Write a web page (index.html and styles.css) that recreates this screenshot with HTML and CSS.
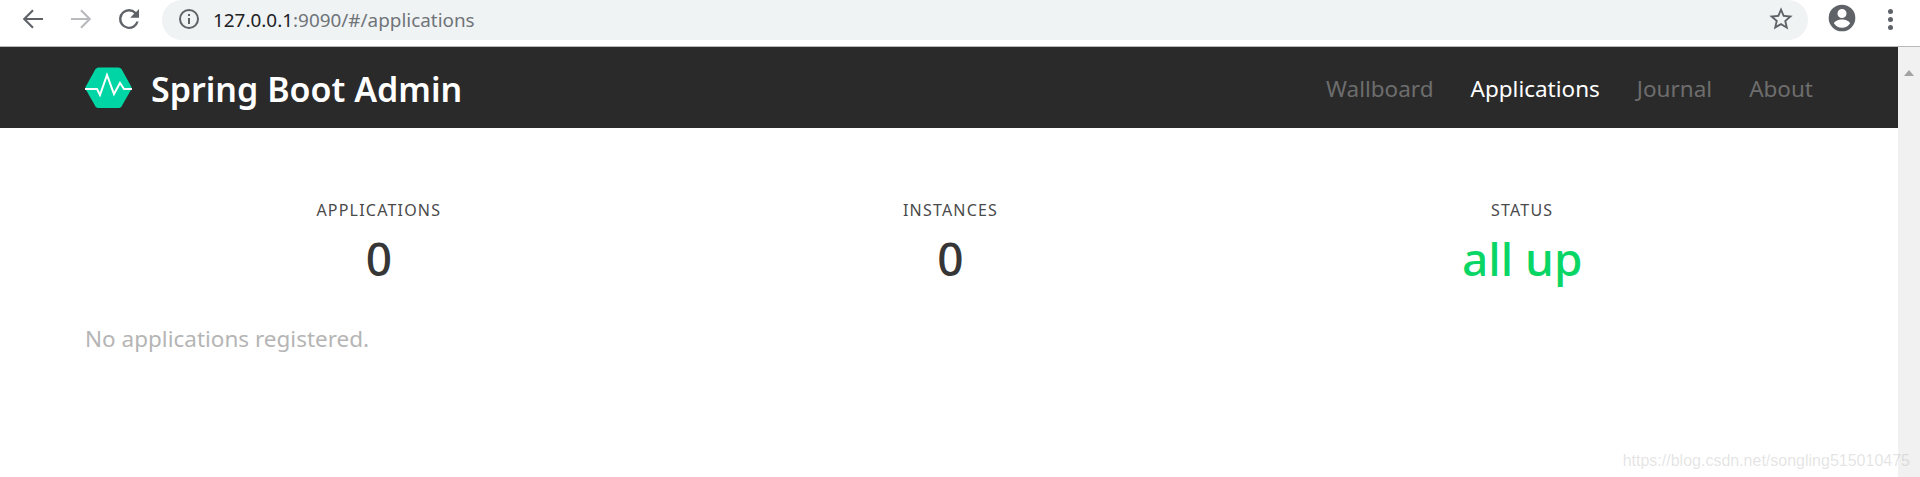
FILE: index.html
```html
<!doctype html>
<html lang="en">
  <head>
    <meta charset="UTF-8" />
    <title>Spring Boot Admin</title>
    <link rel="stylesheet" href="styles.css">
  </head>
  <body>
    <!-- Browser toolbar -->
    <div class="toolbar">
      <div class="toolbar-buttons">
        <svg class="tool-icon" viewBox="0 0 24 24"><path d="M20 12H5M12 5l-7 7 7 7" /></svg>
        <svg class="tool-icon disabled" viewBox="0 0 24 24"><path d="M4 12h15M12 5l7 7-7 7" /></svg>
        <svg class="tool-icon reload" viewBox="0 0 24 24"><path d="M17.65 6.35A7.96 7.96 0 0 0 12 4a8 8 0 1 0 7.73 10h-1.9A6.1 6.1 0 1 1 12 5.9c1.66 0 3.14.69 4.22 1.78L13 11h7V4z" /></svg>
      </div>
      <div class="omnibox">
        <svg class="info-icon" viewBox="0 0 24 24"><path d="M11 7h2v2h-2zm0 4h2v6h-2zm1-9a10 10 0 1 0 0 20 10 10 0 0 0 0-20zm0 18a8 8 0 1 1 0-16 8 8 0 0 1 0 16z" /></svg>
        <div class="url"><span class="url-host">127.0.0.1</span>:9090/#/applications</div>
        <svg class="star-icon" viewBox="0 0 24 24"><path d="M22 9.24l-7.19-.62L12 2 9.19 8.63 2 9.24l5.46 4.73L5.82 21 12 17.27 18.18 21l-1.63-7.03L22 9.24zM12 15.4l-3.76 2.27 1-4.28-3.32-2.88 4.38-.38L12 6.1l1.71 4.04 4.38.38-3.32 2.88 1 4.28L12 15.4z" /></svg>
      </div>
      <svg class="avatar-icon" viewBox="0 0 24 24"><path d="M12 2a10 10 0 1 0 0 20 10 10 0 0 0 0-20zm0 3.2a3.4 3.4 0 1 1 0 6.8 3.4 3.4 0 0 1 0-6.8zm0 14.2a7.4 7.4 0 0 1-6-3.2c.03-2 4-3.1 6-3.1s5.97 1.1 6 3.1a7.4 7.4 0 0 1-6 3.2z" /></svg>
      <div class="menu-dots"><span></span><span></span><span></span></div>
    </div>

    <div class="window">
      <div class="page">
        <!-- Main Header -->
        <div class="main-header">
          <div class="logo">
            <svg class="logo-mark" viewBox="0 0 47 42">
              <path class="hex" d="M.8 19.5 10.5 2Q11.6.5 13.5.5H33.5Q35.4.5 36.5 2L46.2 19.5Q47 21 46.2 22.5L36.5 39.5Q35.4 41 33.5 41H13.5Q11.6 41 10.5 39.5L.8 22.5Q0 21 .8 19.5Z" />
              <path class="pulse" d="M0 22H12L15 28 22 8 29 27 35 16 39 22H47" />
            </svg>
            <div class="logo-text">Spring Boot Admin</div>
          </div>
          <div class="nav">
            <div class="nav-item">Wallboard</div>
            <div class="nav-item active">Applications</div>
            <div class="nav-item">Journal</div>
            <div class="nav-item">About</div>
          </div>
        </div>

        <!-- Summary -->
        <div class="content">
          <div class="stats">
            <div class="stat">
              <div class="stat-label">Applications</div>
              <div class="stat-value">0</div>
            </div>
            <div class="stat">
              <div class="stat-label">Instances</div>
              <div class="stat-value">0</div>
            </div>
            <div class="stat">
              <div class="stat-label">Status</div>
              <div class="stat-value up">all up</div>
            </div>
          </div>
          <p class="empty">No applications registered.</p>
        </div>
      </div>

      <div class="scrollbar"><div class="scroll-arrow"></div></div>
    </div>

    <div class="watermark">https://blog.csdn.net/songling515010475</div>
  </body>
</html>
```

FILE: styles.css
```css
:root {
  --dark: #2a2a2a;
  --muted: #6d6d6d;
  --icon: #5f6368;
  --text: #363636;
  --green: #0ad666;
}

html,
body {
  height: 100%;
}

body {
  margin: 0;
  display: flex;
  flex-direction: column;
  overflow: hidden;
  background-color: #fff;
  color: var(--text);
  font-family: 'Noto Sans', 'Open Sans', sans-serif;
}

/* Browser toolbar */
.toolbar {
  display: flex;
  align-items: flex-start;
  height: 46px;
  flex-shrink: 0;
  border-bottom: 1px solid #b9b9b9;
}

.toolbar-buttons {
  display: flex;
  gap: 18px;
  padding: 4px 0 0 18px;
  width: 162px;
  box-sizing: border-box;
  flex-shrink: 0;
}

.tool-icon {
  width: 30px;
  height: 30px;
  fill: none;
  stroke: var(--icon);
  stroke-width: 1.7;
}

.tool-icon.disabled {
  stroke: #b8babd;
}

.tool-icon.reload {
  fill: var(--icon);
  stroke: none;
}

.omnibox {
  display: flex;
  align-items: center;
  width: 1646px;
  height: 40px;
  padding: 0 13px 0 15px;
  box-sizing: border-box;
  border-radius: 20px;
  background-color: #f0f3f4;
}

.info-icon {
  width: 24px;
  height: 24px;
  margin-top: -2px;
  fill: var(--icon);
  flex-shrink: 0;
}

.url {
  flex: 1;
  margin-left: 12px;
  font-size: 18.9px;
  color: #6f7479;
}

.url-host {
  color: #202124;
}

.star-icon {
  width: 28px;
  height: 28px;
  margin-top: -3px;
  fill: var(--icon);
}

.avatar-icon {
  width: 32px;
  height: 32px;
  margin: 2px 0 0 18px;
  fill: var(--icon);
  flex-shrink: 0;
}

.menu-dots {
  display: flex;
  flex-direction: column;
  gap: 3px;
  margin: 9px 0 0 30px;
}

.menu-dots span {
  width: 5px;
  height: 5px;
  border-radius: 50%;
  background-color: var(--icon);
}

/* Page */
.window {
  display: flex;
  flex: 1;
  min-height: 0;
}

.page {
  flex: 1;
  min-width: 0;
}

.main-header {
  display: flex;
  align-items: center;
  justify-content: space-between;
  height: 81px;
  padding: 0 85px;
  background-color: var(--dark);
}

.logo {
  display: flex;
  align-items: center;
  gap: 19px;
}

.logo-mark {
  width: 47px;
  height: 42px;
}

.hex {
  fill: #00d5a5;
}

.pulse {
  fill: none;
  stroke: #fff;
  stroke-width: 2;
}

.logo-text {
  padding-top: 2px;
  font-size: 34px;
  font-weight: 600;
  color: #fff;
}

.nav {
  display: flex;
  gap: 37px;
  padding-top: 2px;
}

.nav-item {
  font-size: 22.5px;
  color: var(--muted);
}

.nav-item.active {
  color: #fff;
}

.content {
  padding: 70px 85px 0;
}

.stats {
  display: flex;
  padding: 0 5px 0 8px;
}

.stat {
  flex: 1;
  text-align: center;
}

.stat-label {
  font-size: 16px;
  line-height: 24px;
  letter-spacing: 1.2px;
  text-transform: uppercase;
  color: #4a4a4a;
}

.stat-value {
  margin-top: 6px;
  font-size: 46px;
  line-height: 60px;
  font-weight: 500;
}

.stat-value.up {
  color: var(--green);
}

.empty {
  margin: 33px 0 0;
  font-size: 22.5px;
  line-height: 36px;
  color: #b5b5b5;
}

.scrollbar {
  width: 22px;
  flex-shrink: 0;
  padding-top: 23px;
  box-sizing: border-box;
  background-color: #f1f1f1;
}

.scroll-arrow {
  width: 0;
  margin: 0 auto;
  border: 5px solid transparent;
  border-top: 0;
  border-bottom: 6px solid #a3a3a3;
}

.watermark {
  position: absolute;
  right: 10px;
  bottom: 7px;
  font-family: 'Liberation Sans', sans-serif;
  font-size: 16px;
  color: rgba(170, 170, 170, 0.32);
}
```
